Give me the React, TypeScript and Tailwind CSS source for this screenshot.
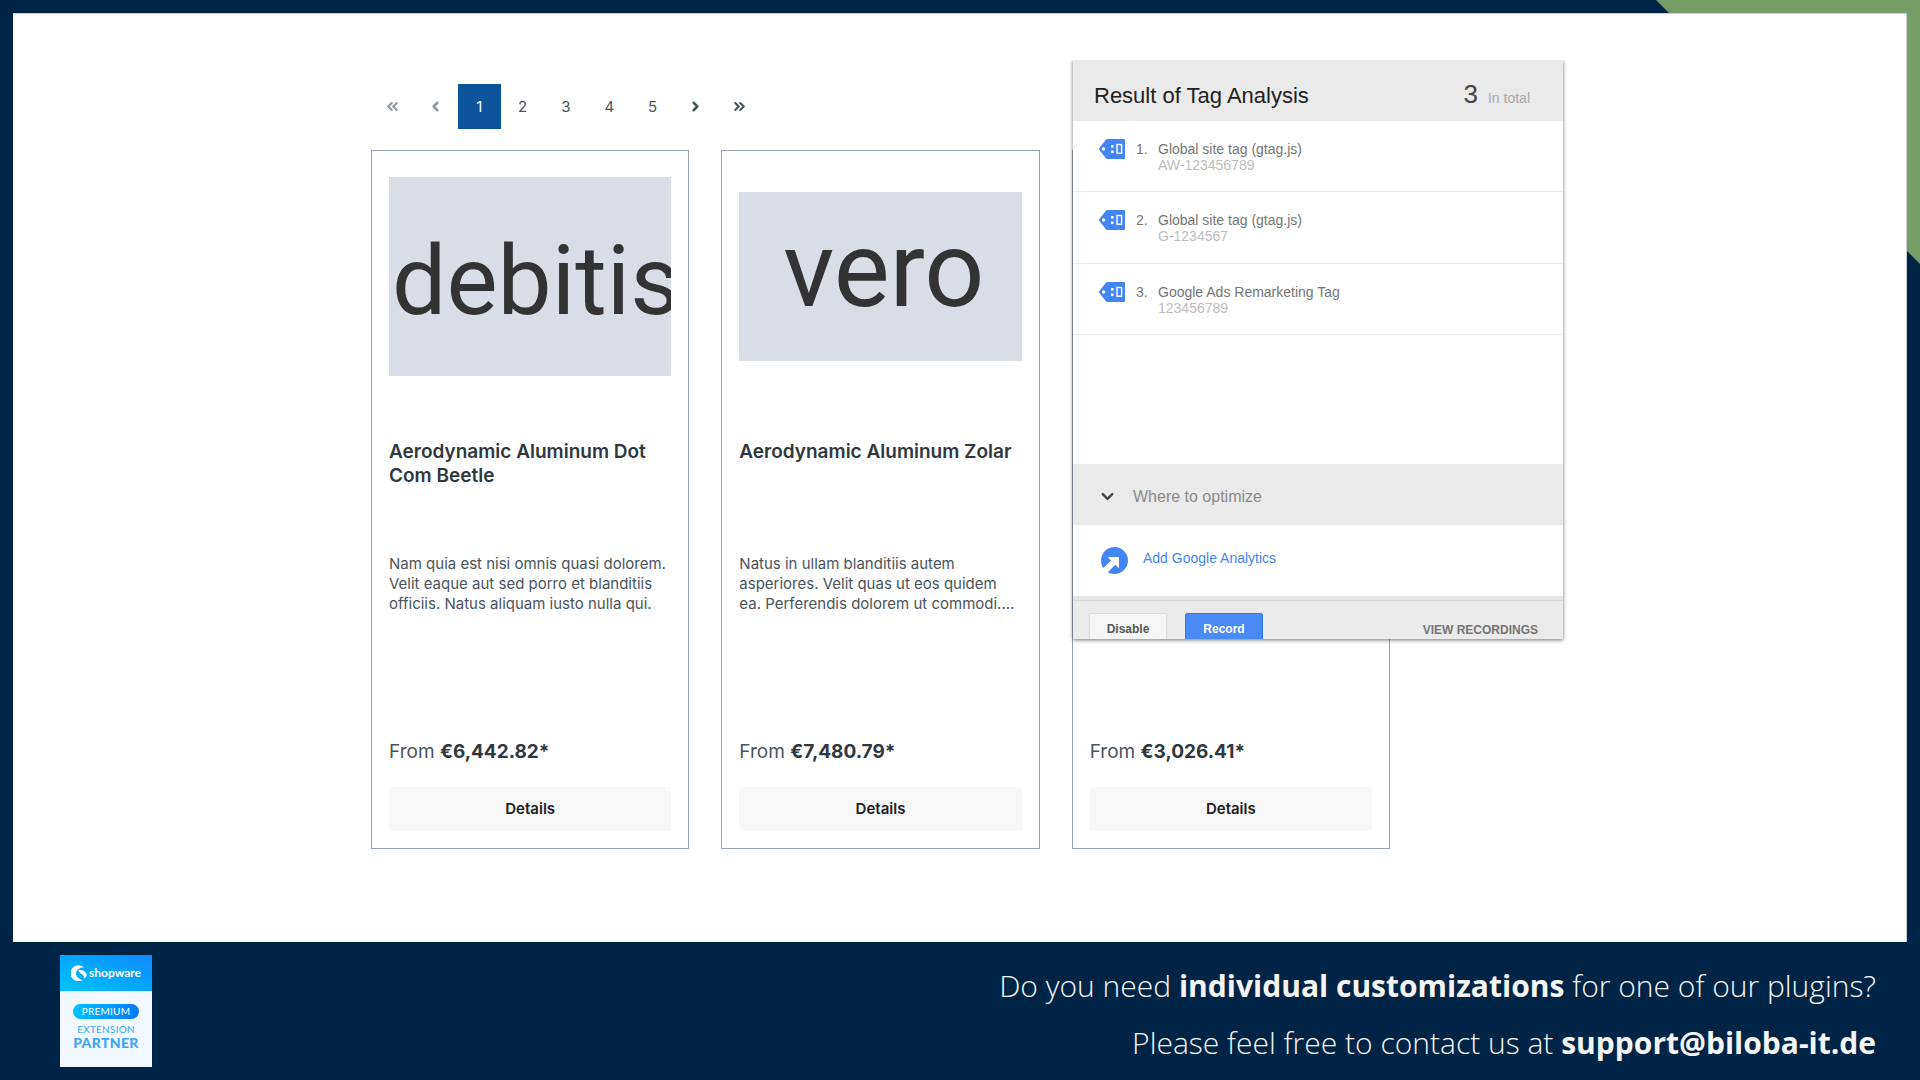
import React from 'react';
import { ChevronDown, ChevronLeft, ChevronRight, ChevronsLeft, ChevronsRight } from 'lucide-react';

type Product = {
  title?: string;
  description?: string;
  price: string;
  thumb?: { text: string; size: number; x: number; y: number; height: number };
};

const products: Product[] = [
  {
    title: 'Aerodynamic Aluminum Dot Com Beetle',
    description: 'Nam quia est nisi omnis quasi dolorem. Velit eaque aut sed porro et blanditiis officiis. Natus aliquam iusto nulla qui.',
    price: '€6,442.82*',
    thumb: { text: 'debitis', size: 96, x: 3, y: 136, height: 199 },
  },
  {
    title: 'Aerodynamic Aluminum Zolar',
    description: 'Natus in ullam blanditiis autem asperiores. Velit quas ut eos quidem ea. Perferendis dolorem ut commodi....',
    price: '€7,480.79*',
    thumb: { text: 'vero', size: 105, x: 44, y: 113, height: 169 },
  },
  { price: '€3,026.41*' },
];

const tags = [
  { name: 'Global site tag (gtag.js)', id: 'AW-123456789' },
  { name: 'Global site tag (gtag.js)', id: 'G-1234567' },
  { name: 'Google Ads Remarketing Tag', id: '123456789' },
];

const TagIcon = () => (
  <svg viewBox="0 0 26 20" className="w-[26px] h-5 shrink-0" aria-hidden="true">
    <path d="M8.5 0H25a1 1 0 0 1 1 1v18a1 1 0 0 1-1 1H8.5a2 2 0 0 1-1.6-.8L.4 10.900a1.500 1.500 0 0 1 0-1.800L6.900.8A2 2 0 0 1 8.500 0Z" fill="#4285f4" />
    <circle cx="4.500" cy="10" r="1.700" fill="#fff" />
    <rect x="12" y="6" width="2.600" height="2.600" fill="#fff" />
    <rect x="12" y="11.500" width="2.600" height="2.600" fill="#fff" />
    <rect x="18" y="5.500" width="4.600" height="8.700" fill="none" stroke="#fff" strokeWidth="1.400" />
  </svg>
);

const AnalyticsIcon = () => (
  <svg viewBox="0 0 27 27" className="size-[27px] shrink-0" aria-hidden="true">
    <circle cx="13.500" cy="13.500" r="13.500" fill="#4285f4" />
    <path d="M6.500 10H18v11.500l-3.700-3.700L6.300 25.800 1.600 21.600l8.400-8.200Z" fill="#fff" />
  </svg>
);

const Pagination = () => (
  <nav aria-label="Pages" className="grid grid-cols-9 w-[390px] h-[45px] text-[15px] text-[#4a545b]">
    <button aria-label="First page" className="flex items-center justify-center text-[#8d99a3]"><ChevronsLeft className="size-[17px]" strokeWidth={3} /></button>
    <button aria-label="Previous page" className="flex items-center justify-center text-[#8d99a3]"><ChevronLeft className="size-[15px]" strokeWidth={4} /></button>
    {[1, 2, 3, 4, 5].map(page => (
      <button key={page} className={page === 1 ? 'pt-0.5 bg-[#0b539b] text-white' : 'pt-0.5'}>{page}</button>
    ))}
    <button aria-label="Next page" className="flex items-center justify-center"><ChevronRight className="size-[15px]" strokeWidth={4} /></button>
    <button aria-label="Last page" className="flex items-center justify-center"><ChevronsRight className="size-[17px]" strokeWidth={3} /></button>
  </nav>
);

const ProductCard = ({ product }: { product: Product }) => (
  <article className="flex flex-col border border-[#98a3af] p-[17px] text-[#2f383e]">
    <div className="h-[217px] flex items-center">
      {product.thumb && (
        <svg viewBox={`0 0 281 ${product.thumb.height}`} className="w-full bg-[#d8dde6]" role="img">
          <text x={product.thumb.x} y={product.thumb.y} fontFamily="Roboto" fontSize={product.thumb.size} fill="#333">{product.thumb.text}</text>
        </svg>
      )}
    </div>
    <h3 className="mt-[55px] h-[114px] text-[19px] leading-6 font-semibold">{product.title}</h3>
    <p className="h-[186px] text-[15px] leading-5 text-[#4a545b]">{product.description}</p>
    <p className="h-[47px] text-[19px] leading-6 text-[#4a545b]">From <strong className="font-bold text-[#2f383e]">{product.price}</strong></p>
    <button className="h-11 bg-[#f8f8f8] text-[15px] font-semibold text-[#212121]">Details</button>
  </article>
);

const TagAssistant = () => (
  <aside className="h-full overflow-hidden flex flex-col bg-white font-['Liberation_Sans',sans-serif] text-sm text-[#757575]">
    <header className="h-[61px] shrink-0 flex items-baseline justify-between bg-[#eaeaea] pt-[18px] pl-[21px] pr-[33px]">
      <h2 className="text-[22px] leading-8 text-[#212121]">Result of Tag Analysis</h2>
      <p className="flex items-baseline gap-2.5 text-[#a8a8a8]"><span className="text-[26px] leading-8 text-[#444]">3</span>In total</p>
    </header>
    <ol className="h-[214px] shrink-0 grid grid-rows-3">
      {tags.map((tag, i) => (
        <li key={i} className="border-b border-[#ececec] flex items-start pt-[18px] pl-[26px]">
          <TagIcon />
          <span className="w-[33px] pl-[11px] pt-0.5 leading-4 shrink-0">{i + 1}.</span>
          <div className="pt-0.5 leading-4">
            <p>{tag.name}</p>
            <p className="text-[#bdbdbd]">{tag.id}</p>
          </div>
        </li>
      ))}
    </ol>
    <button className="mt-[129px] h-[61px] shrink-0 flex items-center gap-4 pt-1 pl-[25px] bg-[#eaeaea] text-base text-[#8a8a8a]">
      <ChevronDown className="size-[19px] text-[#444]" strokeWidth={3} />
      Where to optimize
    </button>
    <a href="#analytics" className="h-[71px] shrink-0 flex items-center gap-[15px] pl-7 text-[#4285f4]">
      <AnalyticsIcon />
      <span className="pb-1.5">Add Google Analytics</span>
    </a>
    <div className="h-1 shrink-0 bg-[#e4e4e4]" />
    <footer className="flex-1 flex items-start bg-[#eaeaea] border-t border-[#d8d8d8] pt-3 pl-4 pr-[25px] text-xs font-bold">
      <button className="h-8 w-[78px] shrink-0 rounded-xs border border-[#dcdcdc] bg-[#f5f5f5] text-[#555]">Disable</button>
      <button className="h-8 w-[78px] shrink-0 ml-[18px] rounded-xs border border-[#3079ed] bg-[#4a8af4] text-white">Record</button>
      <a href="#recordings" className="ml-auto pt-[9px] leading-4">VIEW RECORDINGS</a>
    </footer>
  </aside>
);

const PartnerBadge = () => (
  <div className="w-[92px] h-28 flex flex-col bg-[#f2f8ff] text-center font-[Lato,sans-serif] text-[#3ba4fb]">
    <div className="h-9 flex items-center justify-center gap-0.5 bg-linear-to-tr from-[#00c3ff] to-[#1489ff] text-white">
      <svg viewBox="0 0 16 16" className="size-4" aria-hidden="true">
        <path d="M12.800 2.200A8 8 0 1 0 11.500 15.200C8.500 14.400 5 12.200 5 8.600 5 4.600 9 2.600 12.800 2.200Z" fill="#fff" />
        <path d="M15.800 9.800C14.200 5.500 10.800 4.600 7.500 5.200 8 8 10.500 8.400 12 10c1 1 1.200 2.500.600 3.800 2-.800 3.200-2.400 3.200-4Z" fill="#fff" />
      </svg>
      <span className="text-xs leading-4 font-bold">shopware</span>
    </div>
    <span className="mt-[13px] mx-auto w-[66px] h-[15px] rounded-full bg-linear-to-r from-[#00c3ff] to-[#0a78ff] text-[10px] leading-[15px] tracking-wide text-white">PREMIUM</span>
    <span className="mt-1 text-[10px] leading-3 tracking-wide">EXTENSION</span>
    <span className="text-sm leading-4 font-black tracking-wide">PARTNER</span>
  </div>
);

export default function App() {
  return (
    <div className="relative min-h-screen flex flex-col bg-[#002446] font-[Inter,sans-serif]">
      {/* Corner accent behind the sheet */}
      <svg viewBox="0 0 264 264" className="absolute top-0 right-0 size-[264px]" aria-hidden="true">
        <path d="M0 0h264v264Z" fill="#769d67" />
      </svg>

      <main className="relative flex-1 mt-[13px] mx-[13px] bg-white border-t border-r border-[#c5cfd3] pt-[46px] pb-[93px]">
        <div className="relative w-[1207px] mx-auto pl-[15px] pt-6">
          <Pagination />
          <div className="w-[1019px] mt-[21px] grid grid-cols-3 gap-8">
            {products.map(product => <ProductCard key={product.price} product={product} />)}
          </div>
          {/* Shadow is cut at the top edge of the popup */}
          <div className="absolute top-0 right-0 w-[490px] h-[579px] shadow-[0_1px_4px_rgba(0,0,0,0.55)] [clip-path:inset(0_-8px_-8px_-8px)]">
            <TagAssistant />
          </div>
        </div>
      </main>

      <footer className="flex items-start justify-between pt-[13px] pb-[11px] pl-[60px] pr-11">
        <PartnerBadge />
        <div className="pt-0.5 text-right font-['Open_Sans',sans-serif] font-light text-[30px] leading-[57px] text-[#f5f5f5]">
          <p>Do you need <strong className="font-bold">individual customizations</strong> for one of our plugins?</p>
          <p>Please feel free to contact us at <a href="mailto:support@biloba-it.de" className="font-bold">support@biloba-it.de</a></p>
        </div>
      </footer>
    </div>
  );
}
